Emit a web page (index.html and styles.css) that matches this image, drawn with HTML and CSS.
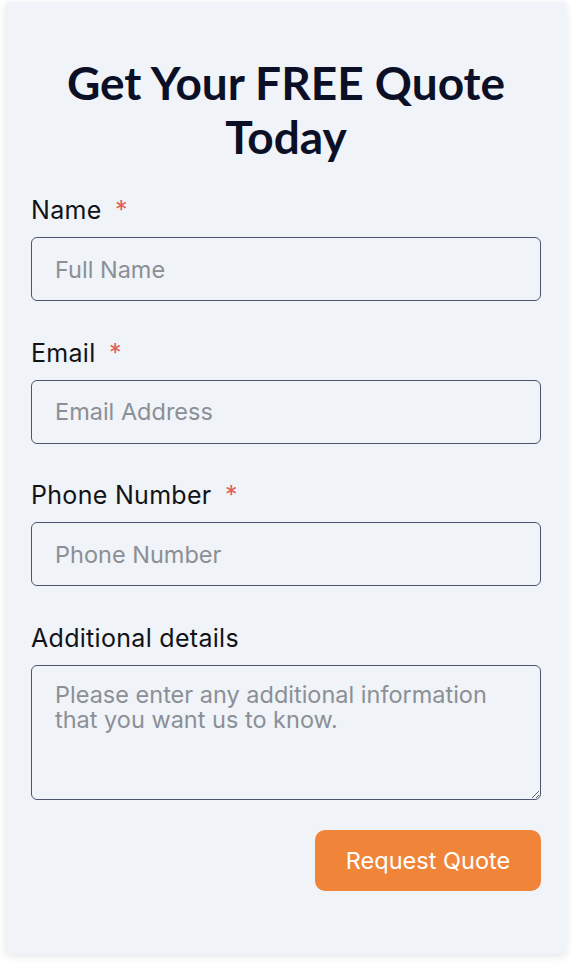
FILE: index.html
```html
<!DOCTYPE html>
<html lang="en">
<head>
    <meta charset="UTF-8">
    <meta name="viewport" content="width=device-width, initial-scale=1.0">
    <title>Get Your FREE Quote Today</title>
    <link rel="stylesheet" href="styles.css">
</head>
<body>
    <form class="quote-card">
        <h1 class="quote-title">Get Your FREE Quote Today</h1>

        <div class="field">
            <label for="name">Name <span class="required">*</span></label>
            <input type="text" id="name" placeholder="Full Name">
        </div>

        <div class="field">
            <label for="email">Email <span class="required">*</span></label>
            <input type="email" id="email" placeholder="Email Address">
        </div>

        <div class="field">
            <label for="phone">Phone Number <span class="required">*</span></label>
            <input type="tel" id="phone" placeholder="Phone Number">
        </div>

        <div class="field">
            <label for="details">Additional details</label>
            <textarea id="details" placeholder="Please enter any additional information that you want us to know."></textarea>
        </div>

        <div class="actions">
            <button type="submit">Request Quote</button>
        </div>
    </form>
</body>
</html>
```

FILE: styles.css
```css
/* page */
body {
    margin: 0;
    padding: 2px 6px 14px;
    background: #ffffff;
    font-family: 'Inter', 'Roboto', sans-serif;
    color: #111318;
}

.quote-card {
    background: #f0f3f7;
    padding: 54px 25px 63px;
    border-radius: 4px;
    box-shadow: 0 2px 8px rgba(20, 30, 60, 0.12);
}

.quote-title {
    font-family: 'Lato', sans-serif;
    font-weight: bold;
    font-size: 46px;
    line-height: 54px;
    color: #0b1026;
    text-align: center;
    margin: 0 0 31px;
}

.field {
    margin-bottom: 36.5px;
}

.field label {
    display: block;
    font-size: 25px;
    letter-spacing: 0.3px;
    line-height: 30px;
    margin-bottom: 12px;
}

.required {
    color: #e0605a;
    margin-left: 6px;
}

.field input,
.field textarea {
    display: block;
    box-sizing: border-box;
    width: 100%;
    border: 1.5px solid #4b5572;
    border-radius: 6px;
    background: transparent;
    font-family: 'Inter', 'Roboto', sans-serif;
    font-size: 23.5px;
    color: #111318;
    padding: 0 23px;
    margin: 0;
}

.field input {
    height: 64px;
}

.field textarea {
    height: 135px;
    padding-top: 16px;
    line-height: 25px;
    resize: vertical;
}

.field input::placeholder,
.field textarea::placeholder {
    color: #8b8f96;
}

.actions {
    display: flex;
    justify-content: flex-end;
    margin-top: -6px;
}

.actions button {
    width: 226px;
    height: 61px;
    border: none;
    border-radius: 10px;
    background: #f0853a;
    color: #ffffff;
    font-family: 'Inter', 'Roboto', sans-serif;
    font-size: 23.5px;
    cursor: pointer;
}
```
